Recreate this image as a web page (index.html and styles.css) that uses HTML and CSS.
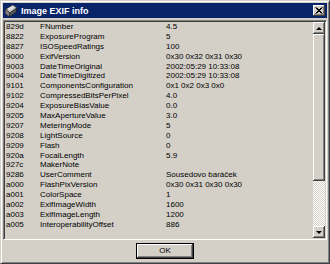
FILE: index.html
```html
<!DOCTYPE html>
<html lang="cs">
<head>
  <meta charset="UTF-8" />
  <title>Image EXIF info</title>
  <link rel="stylesheet" href="styles.css">
</head>
<body>
  <div class="window">
    <div class="titlebar">
      <svg class="app-icon" width="14" height="14" viewBox="0 0 14 14">
        <path d="M2 5 L9 1 L13 4 L6 9 Z" fill="#c0c0c0" stroke="#404040" stroke-width="0.8"/>
        <path d="M2 5 L6 9 L5 13 L1 9 Z" fill="#808080" stroke="#404040" stroke-width="0.8"/>
        <path d="M6 9 L13 4 L12 8 L5 13 Z" fill="#606060" stroke="#202020" stroke-width="0.8"/>
        <path d="M4 5 L9 2 M5 6 L10 3" stroke="#fff" stroke-width="0.8"/>
      </svg>
      <span class="title">Image EXIF info</span>
      <button class="close-btn">
        <svg width="8" height="7" viewBox="0 0 8 7"><path d="M0.5 0.5 L6.5 6.5 M1.5 0.5 L7.5 6.5 M6.5 0.5 L0.5 6.5 M7.5 0.5 L1.5 6.5" stroke="#000" stroke-width="1"/></svg>
      </button>
    </div>

    <div class="listbox">
      <div class="rows">
        <div class="row"><span>829d</span><span>FNumber</span><span>4.5</span></div>
        <div class="row"><span>8822</span><span>ExposureProgram</span><span>5</span></div>
        <div class="row"><span>8827</span><span>ISOSpeedRatings</span><span>100</span></div>
        <div class="row"><span>9000</span><span>ExifVersion</span><span>0x30 0x32 0x31 0x30</span></div>
        <div class="row"><span>9003</span><span>DateTimeOriginal</span><span>2002:05:29 10:33:08</span></div>
        <div class="row"><span>9004</span><span>DateTimeDigitized</span><span>2002:05:29 10:33:08</span></div>
        <div class="row"><span>9101</span><span>ComponentsConfiguration</span><span>0x1 0x2 0x3 0x0</span></div>
        <div class="row"><span>9102</span><span>CompressedBitsPerPixel</span><span>4.0</span></div>
        <div class="row"><span>9204</span><span>ExposureBiasValue</span><span>0.0</span></div>
        <div class="row"><span>9205</span><span>MaxApertureValue</span><span>3.0</span></div>
        <div class="row"><span>9207</span><span>MeteringMode</span><span>5</span></div>
        <div class="row"><span>9208</span><span>LightSource</span><span>0</span></div>
        <div class="row"><span>9209</span><span>Flash</span><span>0</span></div>
        <div class="row"><span>920a</span><span>FocalLength</span><span>5.9</span></div>
        <div class="row"><span>927c</span><span>MakerNote</span><span></span></div>
        <div class="row"><span>9286</span><span>UserComment</span><span>Sousedovo baráček</span></div>
        <div class="row"><span>a000</span><span>FlashPixVersion</span><span>0x30 0x31 0x30 0x30</span></div>
        <div class="row"><span>a001</span><span>ColorSpace</span><span>1</span></div>
        <div class="row"><span>a002</span><span>ExifImageWidth</span><span>1600</span></div>
        <div class="row"><span>a003</span><span>ExifImageLength</span><span>1200</span></div>
        <div class="row"><span>a005</span><span>InteroperabilityOffset</span><span>886</span></div>
      </div>
      <div class="scrollbar">
        <div class="sb-btn"><span class="arrow-up"></span></div>
        <div class="sb-thumb"></div>
        <div class="sb-track"></div>
        <div class="sb-btn"><span class="arrow-down"></span></div>
      </div>
    </div>

    <div class="footer">
      <button class="ok-btn">OK</button>
    </div>
  </div>
</body>
</html>
```

FILE: styles.css
```css
body {
  margin: 0;
  background: #d4d0c8;
  font-family: "Liberation Sans", Arial, sans-serif;
  font-size: 8px;
  color: #000;
}
.window {
  width: 330px;
  height: 264px;
  box-sizing: border-box;
  border: 1px solid;
  border-color: #d4d0c8 #404040 #404040 #d4d0c8;
  box-shadow: inset 1px 1px #fff, inset -1px -1px #808080;
  padding: 2px;
  display: flex;
  flex-direction: column;
}
.titlebar {
  height: 15px;
  background: #0a246a;
  display: flex;
  align-items: center;
  padding: 0 2px 0 1px;
  gap: 3px;
}
.app-icon {
  flex: none;
}
.title {
  flex: 1;
  color: #fff;
  font-weight: bold;
  font-size: 9px;
}
.close-btn {
  width: 12px;
  height: 11px;
  padding: 0;
  margin: 0;
  background: #d4d0c8;
  border: none;
  box-shadow: inset -1px -1px #404040, inset 1px 1px #fff, inset -2px -2px #808080;
  display: flex;
  align-items: center;
  justify-content: center;
}
.listbox {
  margin-top: 2px;
  height: 220px;
  box-sizing: border-box;
  border: 1px solid;
  border-color: #808080 #fff #fff #808080;
  box-shadow: inset 1px 1px #404040, inset -1px -1px #d4d0c8;
  padding: 1px;
  display: flex;
}
.rows {
  flex: 1;
  padding-left: 1px;
  overflow: hidden;
}
.row {
  display: grid;
  grid-template-columns: 34px 126px 1fr;
  height: 9.9px;
  line-height: 9.9px;
  white-space: nowrap;
}
.scrollbar {
  width: 12px;
  display: flex;
  flex-direction: column;
}
.sb-btn {
  height: 12px;
  flex: none;
  background: #d4d0c8;
  box-shadow: inset -1px -1px #404040, inset 1px 1px #fff, inset -2px -2px #808080;
  display: flex;
  align-items: center;
  justify-content: center;
}
.arrow-up {
  border-left: 3px solid transparent;
  border-right: 3px solid transparent;
  border-bottom: 3px solid #000;
}
.arrow-down {
  border-left: 3px solid transparent;
  border-right: 3px solid transparent;
  border-top: 3px solid #000;
}
.sb-thumb {
  height: 147px;
  flex: none;
  background: #d4d0c8;
  box-shadow: inset -1px -1px #404040, inset 1px 1px #fff, inset -2px -2px #808080;
}
.sb-track {
  flex: 1;
  background: repeating-conic-gradient(#fff 0 25%, #d4d0c8 0 50%) 0 0 / 2px 2px;
}
.footer {
  flex: 1;
  display: flex;
  justify-content: center;
  align-items: center;
}
.ok-btn {
  width: 58px;
  height: 16px;
  padding: 0;
  font-family: "Liberation Sans", Arial, sans-serif;
  font-size: 8px;
  background: #d4d0c8;
  border: 1px solid #000;
  box-shadow: inset -1px -1px #404040, inset 1px 1px #fff, inset -2px -2px #808080;
}
```
